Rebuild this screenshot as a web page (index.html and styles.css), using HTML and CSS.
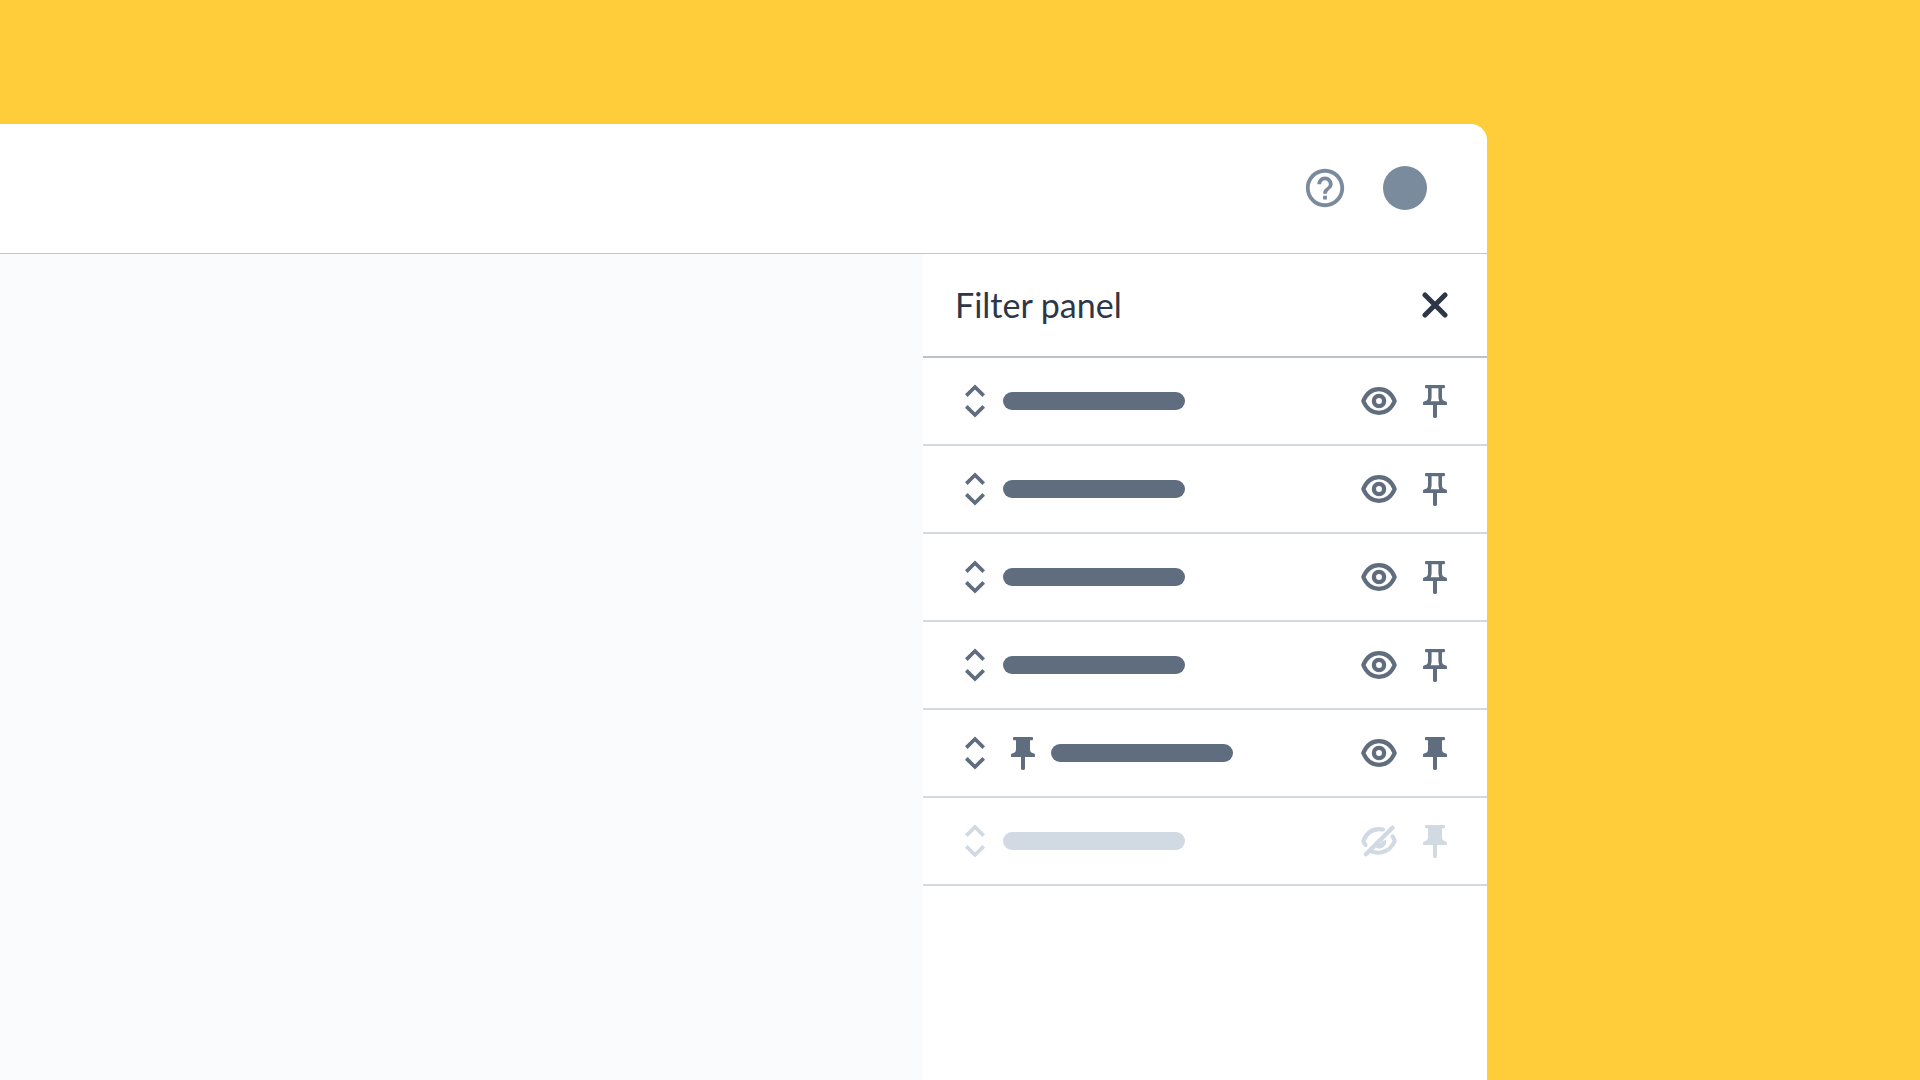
FILE: index.html
```html
<!DOCTYPE html>
<html lang="en">
<head>
<meta charset="utf-8">
<meta name="viewport" content="width=device-width, initial-scale=1">
<title>Filter panel</title>
<link rel="stylesheet" href="styles.css">
</head>
<body>
<svg class="sprite" aria-hidden="true">
  <symbol id="sort" viewBox="0 0 20 34"><path d="M1.300 11.600 10 3l8.700 8.600M1.300 22.400 10 31l8.700-8.600" fill="none" stroke="currentColor" stroke-width="3.700"/></symbol>
  <symbol id="eye" viewBox="0 0 36 28"><path d="M2.300 14C5.500 6.500 11 2.200 18 2.200S30.500 6.500 33.700 14c-3.200 7.500-8.700 11.800-15.700 11.800S5.500 21.500 2.300 14z" fill="none" stroke="currentColor" stroke-width="4.200" stroke-linejoin="round"/><circle cx="18" cy="14" r="5.100" fill="none" stroke="currentColor" stroke-width="4.300"/></symbol>
  <symbol id="eye-off" viewBox="0 0 36 28" overflow="visible"><g fill="none" stroke="currentColor" stroke-linecap="round" stroke-linejoin="round"><path d="M22 2.500C12.500.900 5.700 5.500 2.300 14c.6 1.700 1.300 2.800 2.300 4M31.500 9.500c1 1.300 1.700 2.800 2.200 4.500-4.300 10-13.400 13.700-22.700 10.600" stroke-width="4.100"/><path d="M4.800 27.200 31.500.800" stroke-width="4.400"/></g><path d="M25 13a7 7 0 0 1-10.500 7.400l4.500-4.400c1.600-.2 2-.6 2.100-2z" fill="currentColor"/></symbol>
  <symbol id="pin" viewBox="0 0 24 33"><path fill="currentColor" fill-rule="evenodd" d="M3 0h18q1 0 1 1v1.300q0 1-1 1h-2V12q0 3.400 2.500 4l1.500.5q1 .3 1 1.500v1.500q0 .5-1 .5h-9v11.500q0 1.500-2 1.500t-2-1.500V20H1q-1 0-1-.5V18q0-1.200 1-1.500L2.500 16Q5 15.400 5 12V3.300H3q-1 0-1-1V1q0-1 1-1zM8.600 3.300V12q0 2.500-.9 4.200h8.600q-.9-1.700-.9-4.200V3.300z"/></symbol>
  <symbol id="pin-filled" viewBox="0 0 24 33"><path fill="currentColor" d="M3 0h18q1 0 1 1v1.300q0 1-1 1h-2V12q0 3.400 2.500 4l1.500.5q1 .3 1 1.500v1.500q0 .5-1 .5h-9v11.500q0 1.500-2 1.500t-2-1.500V20H1q-1 0-1-.5V18q0-1.200 1-1.500L2.500 16Q5 15.400 5 12V3.300H3q-1 0-1-1V1q0-1 1-1z"/></symbol>
</svg>
<div class="stage">
  <div class="window">
    <header class="topbar">
      <button class="icon-button" type="button" aria-label="Help"><svg class="icon-help" viewBox="0 0 24 24"><path fill="currentColor" d="M11 18h2v-2h-2v2zm1-16C6.480 2 2 6.480 2 12s4.480 10 10 10 10-4.480 10-10S17.520 2 12 2zm0 18c-4.410 0-8-3.590-8-8s3.590-8 8-8 8 3.590 8 8-3.590 8-8 8zm0-14c-2.210 0-4 1.790-4 4h2c0-1.100.9-2 2-2s2 .9 2 2c0 2-3 1.750-3 5h2c0-2.250 3-2.500 3-5 0-2.210-1.790-4-4-4z"/></svg></button>
      <button class="avatar" type="button" aria-label="Account"></button>
    </header>
    <div class="body">
      <main class="content"></main>
      <aside class="panel">
        <div class="panel-head">
          <h1 class="panel-title">Filter panel</h1>
          <button class="icon-button close" type="button" aria-label="Close"><svg class="icon-close" viewBox="0 0 26 26"><path d="M3 3l20 20M23 3 3 23" fill="none" stroke="currentColor" stroke-width="5" stroke-linecap="round"/></svg></button>
        </div>
        <ul class="filters">
          <li class="filter">
            <button class="icon-button" type="button" aria-label="Reorder"><svg class="icon-sort"><use href="#sort"/></svg></button>
            <span class="label"></span>
            <span class="actions"><button class="icon-button" type="button" aria-label="Hide"><svg class="icon-eye"><use href="#eye"/></svg></button><button class="icon-button" type="button" aria-label="Pin"><svg class="icon-pin"><use href="#pin"/></svg></button></span>
          </li>
          <li class="filter">
            <button class="icon-button" type="button" aria-label="Reorder"><svg class="icon-sort"><use href="#sort"/></svg></button>
            <span class="label"></span>
            <span class="actions"><button class="icon-button" type="button" aria-label="Hide"><svg class="icon-eye"><use href="#eye"/></svg></button><button class="icon-button" type="button" aria-label="Pin"><svg class="icon-pin"><use href="#pin"/></svg></button></span>
          </li>
          <li class="filter">
            <button class="icon-button" type="button" aria-label="Reorder"><svg class="icon-sort"><use href="#sort"/></svg></button>
            <span class="label"></span>
            <span class="actions"><button class="icon-button" type="button" aria-label="Hide"><svg class="icon-eye"><use href="#eye"/></svg></button><button class="icon-button" type="button" aria-label="Pin"><svg class="icon-pin"><use href="#pin"/></svg></button></span>
          </li>
          <li class="filter">
            <button class="icon-button" type="button" aria-label="Reorder"><svg class="icon-sort"><use href="#sort"/></svg></button>
            <span class="label"></span>
            <span class="actions"><button class="icon-button" type="button" aria-label="Hide"><svg class="icon-eye"><use href="#eye"/></svg></button><button class="icon-button" type="button" aria-label="Pin"><svg class="icon-pin"><use href="#pin"/></svg></button></span>
          </li>
          <li class="filter">
            <button class="icon-button" type="button" aria-label="Reorder"><svg class="icon-sort"><use href="#sort"/></svg></button>
            <span class="marker"><svg class="icon-pin"><use href="#pin-filled"/></svg></span>
            <span class="label"></span>
            <span class="actions"><button class="icon-button" type="button" aria-label="Hide"><svg class="icon-eye"><use href="#eye"/></svg></button><button class="icon-button" type="button" aria-label="Unpin"><svg class="icon-pin"><use href="#pin-filled"/></svg></button></span>
          </li>
          <li class="filter filter-hidden">
            <button class="icon-button" type="button" aria-label="Reorder"><svg class="icon-sort"><use href="#sort"/></svg></button>
            <span class="label"></span>
            <span class="actions"><button class="icon-button" type="button" aria-label="Show"><svg class="icon-eye"><use href="#eye-off"/></svg></button><button class="icon-button" type="button" aria-label="Unpin"><svg class="icon-pin"><use href="#pin-filled"/></svg></button></span>
          </li>
        </ul>
      </aside>
    </div>
  </div>
</div>
</body>
</html>
```
FILE: styles.css
```css
* {
  box-sizing: border-box;
}

body {
  margin: 0;
  background: #ffcd3a;
  color: #2d3748;
  font-family: Lato, "Liberation Sans", sans-serif;
}

.sprite {
  display: none;
}

svg {
  display: block;
}

button {
  border: 0;
  padding: 0;
  background: none;
  color: inherit;
  cursor: pointer;
}

.stage {
  display: flex;
  min-height: 100vh;
  padding: 124px 433px 0 0;
}

.window {
  flex: 1;
  display: flex;
  flex-direction: column;
  overflow: hidden;
  border-radius: 0 16px 0 0;
  background: #ffffff;
}

.topbar {
  display: flex;
  align-items: center;
  justify-content: flex-end;
  gap: 35px;
  height: 130px;
  padding: 0 60px 1px 0;
  border-bottom: 1px solid #c2c5cf;
  color: #7b8b9e;
}

.icon-help {
  width: 46px;
  height: 46px;
}

.avatar {
  width: 44px;
  height: 44px;
  border-radius: 50%;
  background: #7b8b9e;
}

.body {
  flex: 1;
  display: flex;
}

.content {
  flex: 1;
  background: #fafbfd;
}

.panel {
  width: 564px;
}

.panel-head {
  display: flex;
  align-items: center;
  justify-content: space-between;
  height: 104px;
  padding: 0 39px 0 32px;
  border-bottom: 2px solid #bcc0c9;
}

.panel-title {
  margin: 0;
  font-size: 34px;
  font-weight: 400;
  line-height: 40px;
}

.icon-close {
  width: 26px;
  height: 26px;
}

.filters {
  margin: 0;
  padding: 0;
  list-style: none;
}

.filter {
  display: flex;
  align-items: center;
  height: 88px;
  padding: 0 40px 0 42px;
  border-bottom: 2px solid #d4d9df;
  color: #606d7f;
}

.filter-hidden {
  color: #d1d9e3;
}

.icon-sort {
  width: 20px;
  height: 34px;
}

.label {
  width: 182px;
  height: 18px;
  margin-left: 18px;
  border-radius: 9px;
  background: currentColor;
}

.marker {
  margin-left: 26px;
  margin-right: -2px;
}

.actions {
  display: flex;
  align-items: center;
  gap: 26px;
  margin-left: auto;
}

.icon-eye {
  width: 36px;
  height: 28px;
  overflow: visible;
}

.icon-pin {
  width: 24px;
  height: 33px;
}
```
